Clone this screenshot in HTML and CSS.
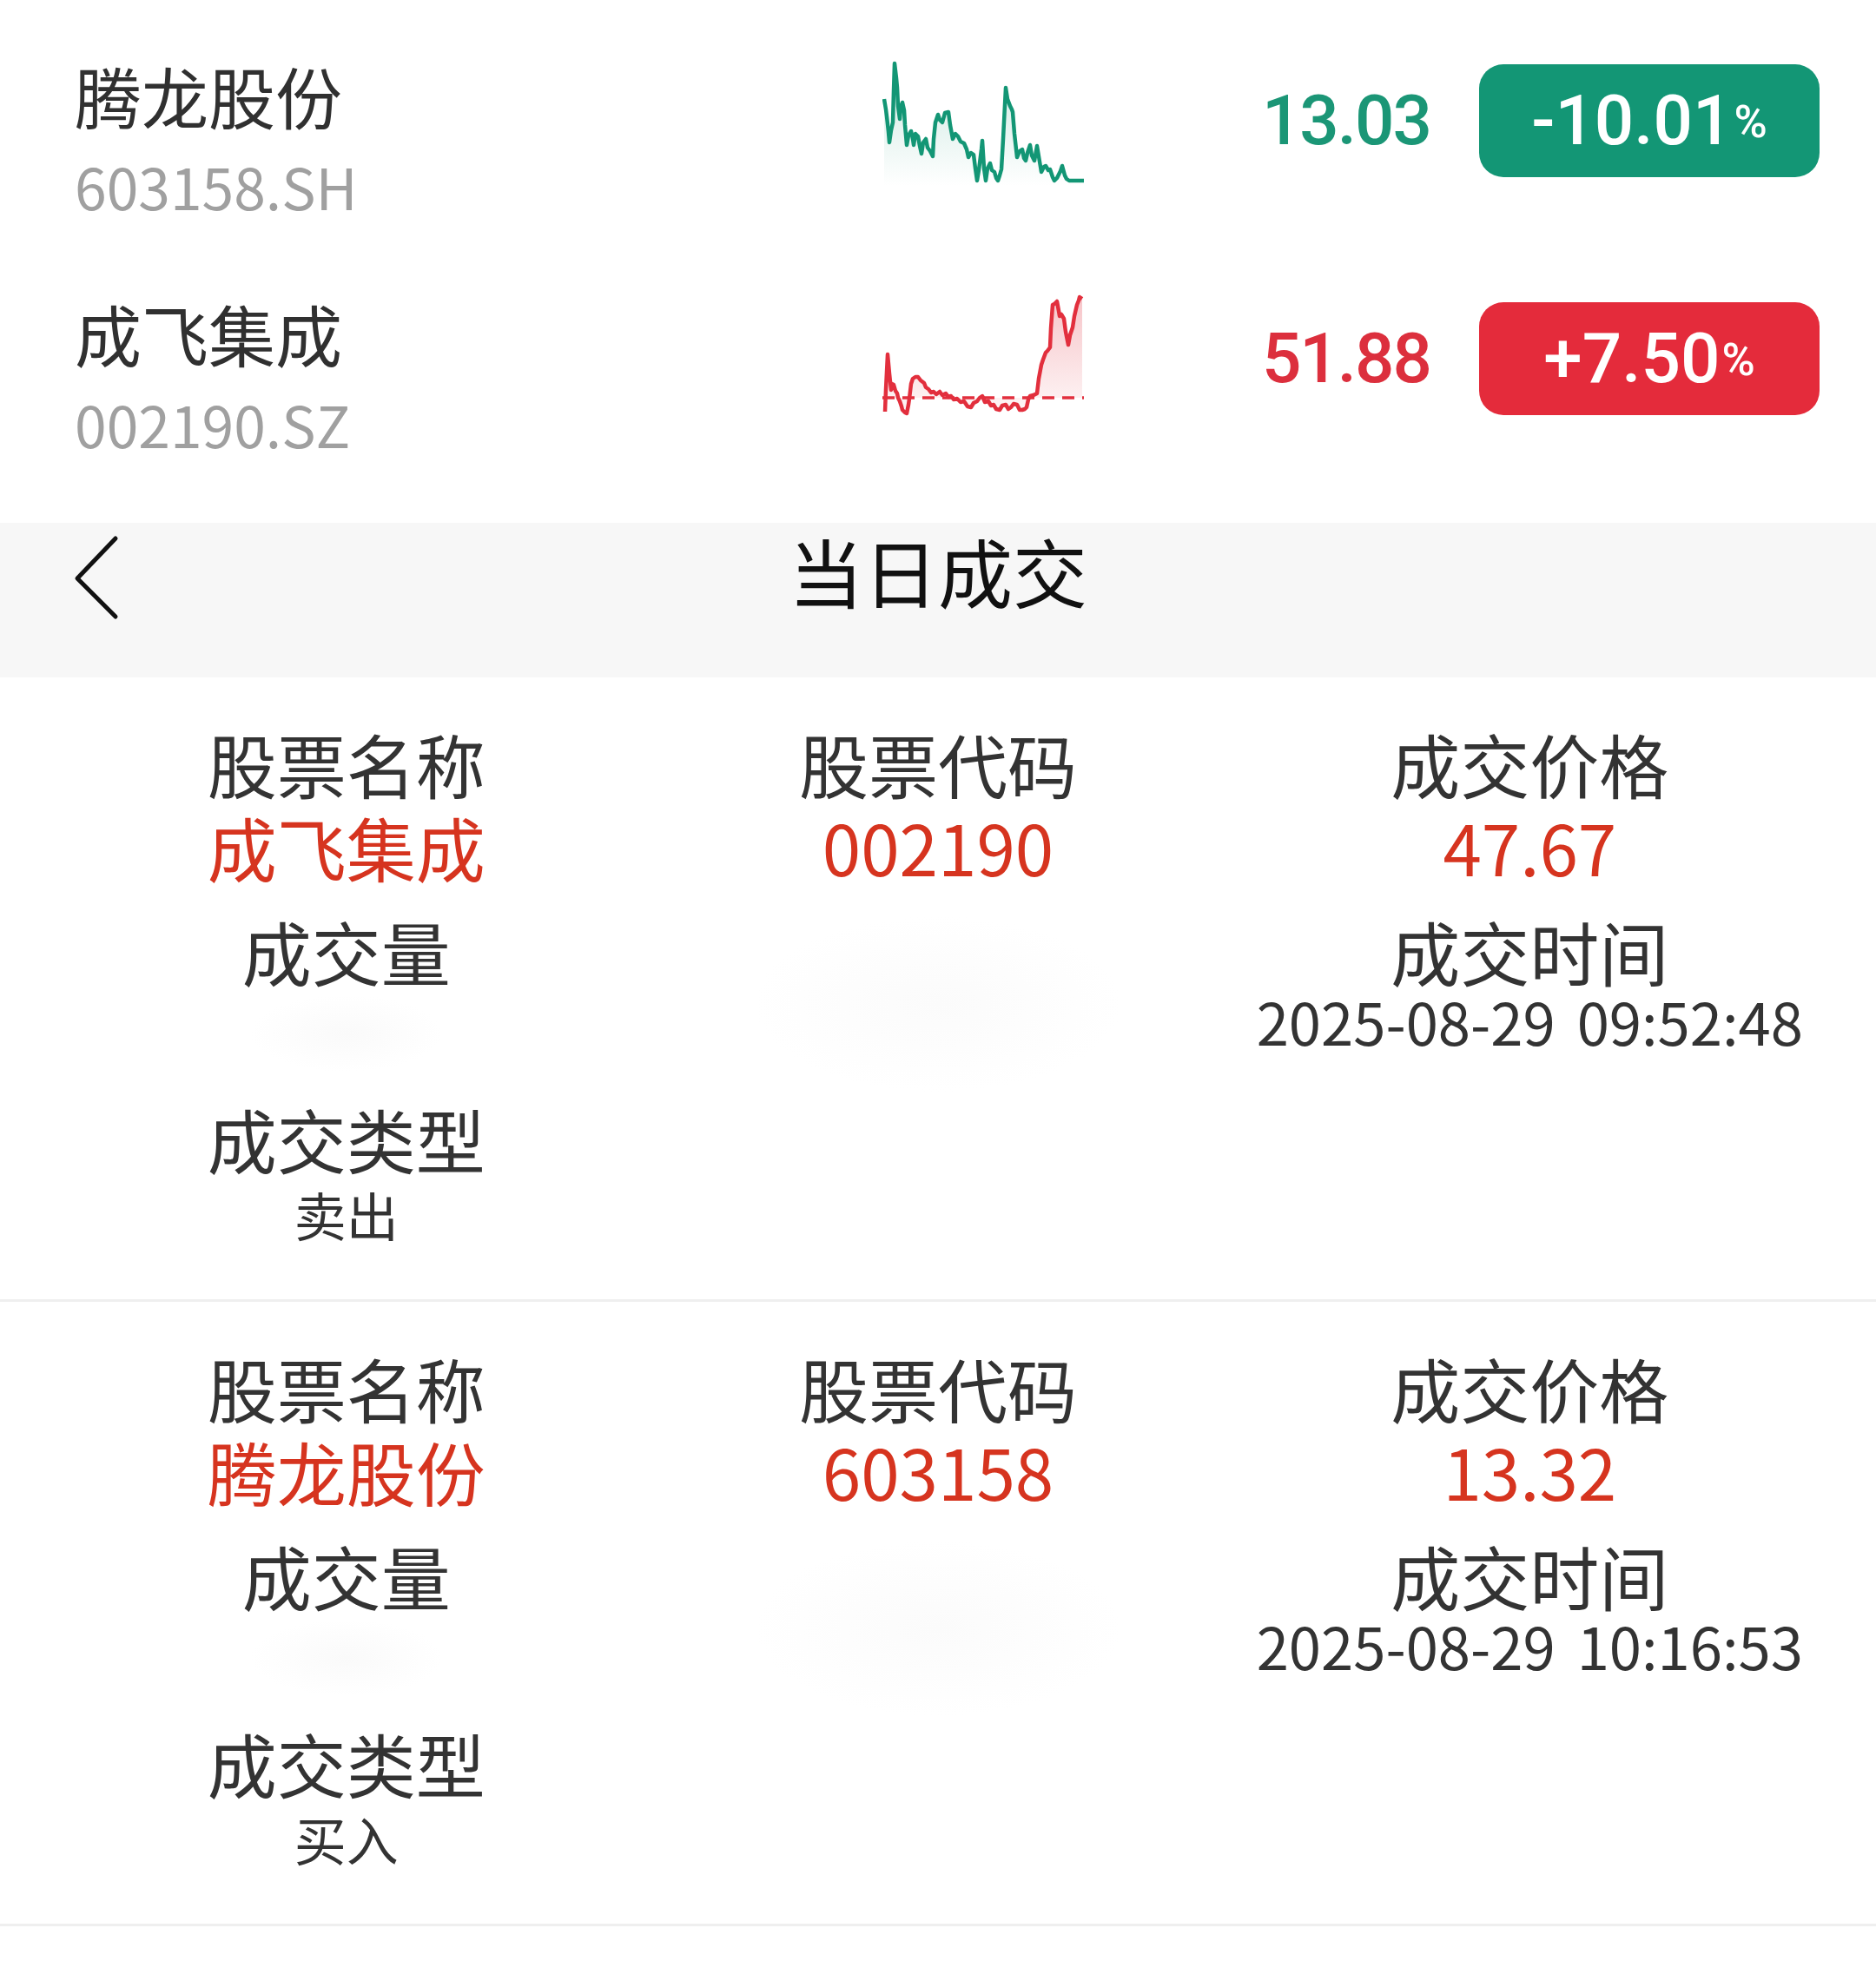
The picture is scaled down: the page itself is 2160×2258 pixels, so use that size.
FILE: index.html
```html
<!DOCTYPE html>
<html lang="zh-CN">
<head>
    <meta charset="UTF-8">
    <meta name="viewport" content="width=device-width, initial-scale=1.0">
    <title>当日成交</title>
    <link rel="stylesheet" href="styles.css">
</head>
<body>
    <div class="stock-list">
        <div class="stock-row">
            <div class="stock-info">
                <div class="stock-name">腾龙股份</div>
                <div class="stock-code">603158.SH</div>
            </div>
            <svg class="spark" width="232" height="150" viewBox="0 0 232 150">
                <defs>
                    <linearGradient id="fillGreen" x1="0" y1="0" x2="0" y2="1">
                        <stop offset="0" stop-color="#139675" stop-opacity="0.22"/>
                        <stop offset="1" stop-color="#139675" stop-opacity="0"/>
                    </linearGradient>
                </defs>
                <path fill="url(#fillGreen)" d="M2 50 L5 70 L8 100 L12 77 L14 9 L17 37 L20 73 L23 54 L25 63 L28 103 L33 87 L36 103 L41 93 L45 113 L50 96 L55 110 L58 116 L61 77 L64 68 L69 77 L76 65 L81 96 L87 93 L94 103 L99 119 L105 116 L109 146 L112 126 L115 100 L119 146 L124 126 L129 136 L133 146 L137 133 L142 39 L147 60 L150 67 L155 119 L161 110 L165 123 L170 105 L175 123 L178 106 L183 136 L188 129 L193 133 L198 146 L203 139 L207 129 L212 144 L217 146 L232 146 L232 150 L2 150 Z"/>
                <polyline fill="none" stroke="#139675" stroke-width="4.5" stroke-linejoin="round" points="2,50 4,62 5,70 7,88 8,100 10,86 12,77 13,40 14,9 16,26 17,37 18,58 20,73 21,60 23,54 25,63 26,80 28,103 30,92 33,87 35,96 36,103 38,90 41,93 43,104 45,113 47,100 50,96 52,106 55,110 58,116 59,96 61,77 64,68 66,74 69,77 72,66 76,65 78,80 81,96 84,90 87,93 90,99 94,101 97,108 99,117 102,112 105,114 107,130 109,144 111,132 112,124 114,108 115,98 117,130 119,144 121,130 124,124 126,132 129,134 131,141 133,144 135,138 137,131 139,96 142,37 144,50 147,58 149,62 150,65 152,90 155,117 158,110 161,108 163,118 165,121 167,112 170,103 172,115 175,121 177,110 178,104 181,122 183,134 186,128 188,127 191,132 193,131 196,140 198,144 201,141 203,137 205,133 207,127 210,138 212,142 215,144 217,144 232,144"/>
            </svg>
            <div class="price down">13.03</div>
            <div class="change down">-10.01<span class="pct">%</span></div>
        </div>
        <div class="stock-row">
            <div class="stock-info">
                <div class="stock-name">成飞集成</div>
                <div class="stock-code">002190.SZ</div>
            </div>
            <svg class="spark" width="232" height="150" viewBox="0 0 232 150">
                <defs>
                    <linearGradient id="fillRed" x1="0" y1="0" x2="0" y2="1">
                        <stop offset="0" stop-color="#e22f3d" stop-opacity="0.28"/>
                        <stop offset="1" stop-color="#e22f3d" stop-opacity="0.04"/>
                    </linearGradient>
                </defs>
                <path fill="url(#fillRed)" d="M3 136 L6 70 L10 111 L13 105 L17 115 L20 124 L23 134 L28 138 L31 121 L35 98 L41 96 L48 103 L53 110 L59 113 L66 113 L73 115 L79 118 L86 121 L94 124 L102 131 L109 124 L115 118 L122 124 L128 128 L135 134 L142 128 L148 131 L155 128 L161 134 L166 131 L170 118 L178 115 L183 82 L188 68 L193 62 L196 13 L201 9 L204 26 L209 29 L214 59 L219 39 L224 13 L227 4 L230 6 L230 120 L3 120 Z"/>
                <line x1="0" y1="120" x2="232" y2="120" stroke="#e22f3d" stroke-width="3.5" stroke-dasharray="14 9"/>
                <polyline fill="none" stroke="#e22f3d" stroke-width="4.5" stroke-linejoin="round" points="3,136 4,110 6,70 8,92 10,111 11,104 13,105 15,112 17,115 18,120 20,124 22,130 23,134 26,137 28,138 30,128 31,121 33,104 35,98 38,96 41,96 44,100 48,103 50,108 53,110 56,114 59,113 62,116 66,113 69,117 73,115 76,119 79,118 82,122 86,121 90,125 94,124 98,130 102,131 105,126 109,124 112,120 115,118 118,125 122,124 125,129 128,128 131,133 135,134 138,129 142,128 145,133 148,131 151,127 155,128 158,134 161,134 164,133 166,131 168,122 170,118 174,117 178,115 180,98 183,82 185,76 188,68 190,66 193,62 194,40 196,13 198,12 201,9 203,20 204,26 206,24 209,29 211,44 214,59 216,48 219,39 221,26 224,13 226,8 227,4 230,6"/>
            </svg>
            <div class="price up">51.88</div>
            <div class="change up">+7.50<span class="pct">%</span></div>
        </div>
    </div>

    <div class="nav-bar">
        <div class="nav-back">
            <svg width="60" height="100" viewBox="0 0 60 100">
                <polyline points="53,5 9,51 53,95" fill="none" stroke="#111" stroke-width="5" stroke-linecap="round" stroke-linejoin="round"/>
            </svg>
        </div>
        <div class="nav-title">当日成交</div>
        <div></div>
    </div>

    <div class="trade">
        <div class="trade-col">
            <div class="field">
                <div class="label">股票名称</div>
                <div class="value">成飞集成</div>
            </div>
            <div class="field">
                <div class="label">成交量</div>
                <div class="value masked"></div>
            </div>
            <div class="field">
                <div class="label">成交类型</div>
                <div class="value plain">卖出</div>
            </div>
        </div>
        <div class="trade-col">
            <div class="field">
                <div class="label">股票代码</div>
                <div class="value">002190</div>
            </div>
            <div class="smudge"></div>
        </div>
        <div class="trade-col">
            <div class="field">
                <div class="label">成交价格</div>
                <div class="value">47.67</div>
            </div>
            <div class="field">
                <div class="label">成交时间</div>
                <div class="value time">2025-08-29 09:52:48</div>
            </div>
        </div>
    </div>

    <div class="trade">
        <div class="trade-col">
            <div class="field">
                <div class="label">股票名称</div>
                <div class="value">腾龙股份</div>
            </div>
            <div class="field">
                <div class="label">成交量</div>
                <div class="value masked"></div>
            </div>
            <div class="field">
                <div class="label">成交类型</div>
                <div class="value plain">买入</div>
            </div>
        </div>
        <div class="trade-col">
            <div class="field">
                <div class="label">股票代码</div>
                <div class="value">603158</div>
            </div>
            <div class="smudge"></div>
        </div>
        <div class="trade-col">
            <div class="field">
                <div class="label">成交价格</div>
                <div class="value">13.32</div>
            </div>
            <div class="field">
                <div class="label">成交时间</div>
                <div class="value time">2025-08-29 10:16:53</div>
            </div>
        </div>
    </div>
</body>
</html>
```

FILE: styles.css
```css
body {
    margin: 0;
    background-color: #fff;
    font-family: "Noto Sans CJK SC", "Noto Sans", sans-serif;
    color: #333;
}
.stock-list {
    padding-top: 2px;
}
.stock-row {
    display: grid;
    grid-template-columns: 930px 232px 399px 1fr;
    align-items: center;
    height: 274px;
    padding: 0 65px 0 86px;
}
.stock-info {
    align-self: start;
    padding-top: 60px;
}
.stock-name {
    font-size: 77px;
    line-height: 96px;
    color: #303030;
}
.stock-code {
    font-size: 66px;
    line-height: 110px;
    color: #a0a0a0;
}
.spark {
    display: block;
}
.price {
    font-family: Roboto, "Liberation Sans", sans-serif;
    font-weight: 500;
    font-size: 80px;
    letter-spacing: -2px;
    line-height: 1;
    text-align: right;
}
.price.down {
    color: #1b9676;
}
.price.up {
    color: #dc2f3d;
}
.change {
    margin-left: 56px;
    height: 130px;
    border-radius: 28px;
    display: flex;
    align-items: center;
    justify-content: center;
    font-family: Roboto, "Liberation Sans", sans-serif;
    font-weight: 500;
    font-size: 80px;
    color: #fff;
    align-self: center;
}
.change .pct {
    font-size: 52px;
    margin-left: 2px;
    align-self: flex-end;
    margin-bottom: 33px;
}
.change.down {
    background-color: #139675;
}
.change.up {
    background-color: #e42b3b;
}
.nav-bar {
    margin-top: 52px;
    height: 178px;
    box-sizing: border-box;
    padding-top: 5px;
    background-color: #f7f7f7;
    display: grid;
    grid-template-columns: 1fr auto 1fr;
    align-items: start;
}
.nav-back {
    padding-left: 80px;
    padding-top: 8px;
}
.nav-back svg {
    display: block;
}
.nav-title {
    font-size: 86px;
    line-height: 100px;
    color: #111;
}
.trade {
    display: grid;
    grid-template-columns: repeat(3, 1fr);
    padding: 50px 58px 58px;
    border-bottom: 3px solid #efefef;
}
.trade-col {
    display: flex;
    flex-direction: column;
    align-items: center;
    gap: 24px;
}
.field {
    text-align: center;
}
.label {
    font-size: 80px;
    line-height: 96px;
    color: #333;
}
.value {
    font-size: 80px;
    line-height: 96px;
    color: #d6341f;
    white-space: nowrap;
}
.value.masked {
    height: 96px;
    width: 240px;
    background: radial-gradient(ellipse at center, #fafafa 0%, rgba(255, 255, 255, 0) 65%);
}
.value.plain {
    font-size: 60px;
    line-height: 80px;
    color: #333;
}
.value.time {
    font-size: 67px;
    line-height: 66px;
    word-spacing: 10px;
    color: #333;
}
.smudge {
    width: 460px;
    height: 220px;
    background: radial-gradient(ellipse at center, #fbfbfb 0%, rgba(255, 255, 255, 0) 65%);
}
```
